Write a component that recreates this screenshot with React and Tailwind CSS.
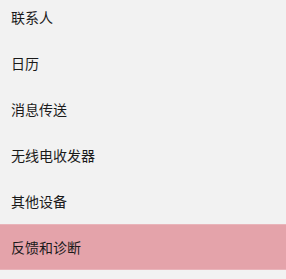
export default function App() {
  const items = ["联系人", "日历", "消息传送", "无线电收发器", "其他设备", "反馈和诊断"];
  return (
    <div className="w-[286px] h-[279px] bg-[#f2f2f2] overflow-hidden" style={{ fontFamily: '"Noto Sans CJK SC", "Noto Sans", sans-serif' }}>
      <div className="-mt-[6px] flex flex-col">
        {items.map((t, i) => (
          <div
            key={t}
            className={
              i === 5
                ? "h-[46px] flex items-center pl-[11px] text-[14px] text-[#1a1a1a] bg-[#e4a3aa] border-y border-[#e9b4ba]"
                : "h-[46px] flex items-center pl-[11px] text-[14px] text-[#1a1a1a]"
            }
          >
            {t}
          </div>
        ))}
      </div>
    </div>
  );
}
